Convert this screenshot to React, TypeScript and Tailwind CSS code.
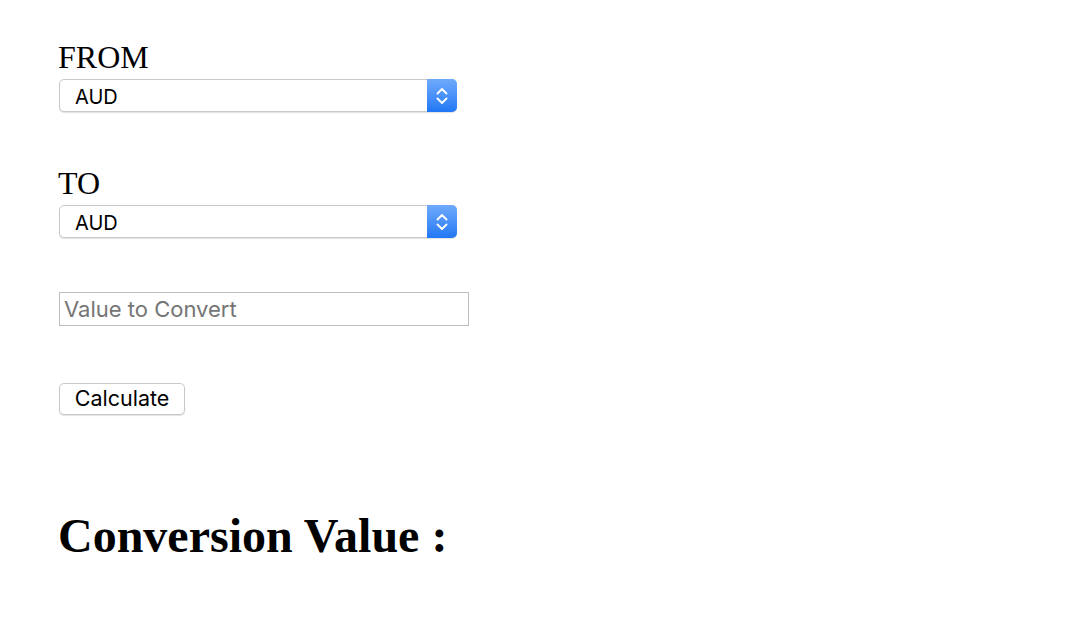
import React from "react";

function FakeSelect({ value }: { value: string }) {
  return (
    <div className="flex h-[33px] w-[398px] items-stretch rounded-[5px] border border-[#c9c9c9] bg-white shadow-[0_1px_1px_rgba(0,0,0,0.12)]">
      <div className="flex flex-1 items-center pl-[15px] pt-[2px] text-[20px] text-black [font-family:Inter,'Liberation_Sans',Arial,sans-serif]">
        {value}
      </div>
      <div className="-my-px -mr-px flex w-[30px] items-center justify-center rounded-r-[5px] bg-gradient-to-b from-[#6eaafb] to-[#1f77f5]">
        <svg width="12" height="20" viewBox="0 0 12 20" fill="none" stroke="white" strokeWidth="1.9" strokeLinecap="round" strokeLinejoin="round">
          <path d="M1.5 7.5 L6 3 L10.5 7.5" />
          <path d="M1.5 12.5 L6 17 L10.5 12.5" />
        </svg>
      </div>
    </div>
  );
}

export default function App() {
  return (
    <div className="min-h-[634px] bg-white pl-[59px] pt-[39px] [font-family:'Liberation_Serif','Times_New_Roman',serif]">
      <div className="text-[32px] leading-[36px] text-black -ml-px">FROM</div>
      <div className="mt-[4px]">
        <FakeSelect value="AUD" />
      </div>
      <div className="mt-[53px] text-[32px] leading-[36px] text-black -ml-px">TO</div>
      <div className="mt-[4px]">
        <FakeSelect value="AUD" />
      </div>
      <input
        placeholder="Value to Convert"
        className="mt-[54px] block h-[34px] w-[410px] border border-[#bdbdbd] px-[4px] text-[22px] text-black outline-none placeholder:text-[#757575] [font-family:Inter,'Liberation_Sans',Arial,sans-serif]"
      />
      <button className="mt-[57px] block h-[32px] w-[126px] rounded-[5px] border border-[#c9c9c9] bg-white pb-[2px] text-center text-[21.5px] leading-[28px] text-black shadow-[0_1px_1px_rgba(0,0,0,0.12)] [font-family:Inter,'Liberation_Sans',Arial,sans-serif]">
        Calculate
      </button>
      <h1 className="mt-[97px] -ml-px text-[48px] font-bold leading-[48px] text-black">Conversion Value :</h1>
    </div>
  );
}
